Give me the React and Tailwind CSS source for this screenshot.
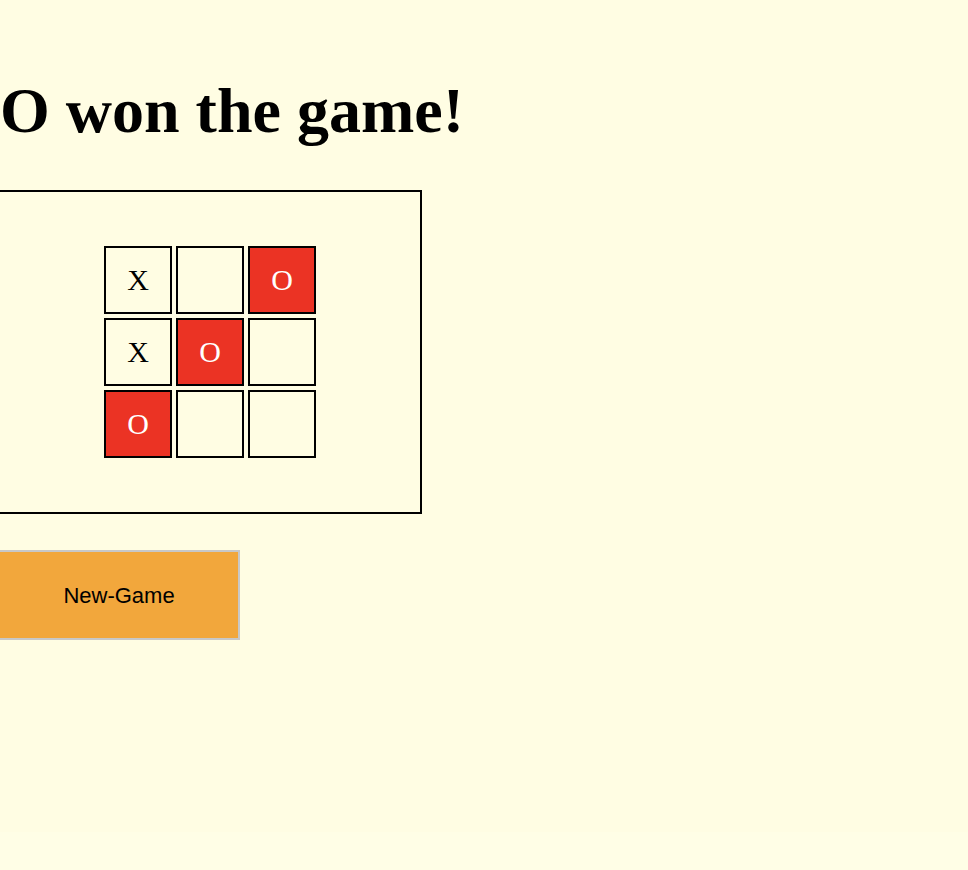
import React from "react";

const board = ["X", "", "O", "X", "O", "", "O", "", ""];

export default function App() {
  return (
    <div className="w-[968px] h-[870px] bg-[#fffee6] overflow-hidden">
      <div className="h-[832px] bg-[#fffde3] overflow-hidden">
        <h1
          className="mt-[75px] mb-[44px] text-[64px] leading-[71px] font-bold text-black whitespace-nowrap"
          style={{ fontFamily: '"Liberation Serif", "Times New Roman", serif' }}
        >
          O won the game!
        </h1>
        <div className="ml-[-2px] w-[424px] h-[324px] border-2 border-black flex items-center justify-center">
          <div className="grid grid-cols-[68px_68px_68px] grid-rows-[68px_68px_68px] gap-[4px]">
            {board.map((v, i) => (
              <div
                key={i}
                className={
                  "border-2 border-black flex items-center justify-center text-[30px] leading-none " +
                  (v === "O" ? "bg-[#eb3324] text-white" : "text-black")
                }
                style={{ fontFamily: '"Liberation Serif", "Times New Roman", serif' }}
              >
                {v}
              </div>
            ))}
          </div>
        </div>
        <button
          className="mt-[36px] ml-[-2px] w-[242px] h-[90px] bg-[#f2a73c] border-2 border-[#c8c8c8] text-[22px] text-black flex items-center justify-center"
          style={{ fontFamily: '"Liberation Sans", Arial, sans-serif' }}
        >
          New-Game
        </button>
      </div>
    </div>
  );
}
